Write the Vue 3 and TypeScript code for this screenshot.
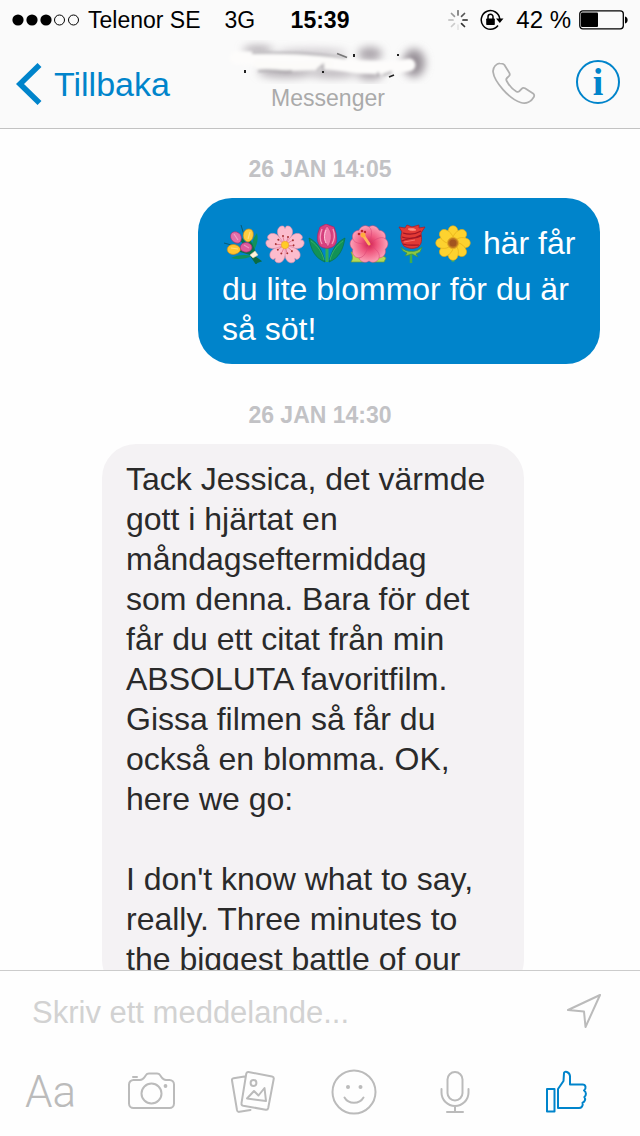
<script setup lang="ts">
import { ref } from 'vue'

interface Message {
  id: number
  time: string
  mine: boolean
  flowers: boolean
  lines: string[]
}

const draft = ref('')

const messages: Message[] = [
  {
    id: 1,
    time: '26 JAN 14:05',
    mine: true,
    flowers: true,
    lines: ['här får', 'du lite blommor för du är', 'så söt!'],
  },
  {
    id: 2,
    time: '26 JAN 14:30',
    mine: false,
    flowers: false,
    lines: [
      'Tack Jessica, det värmde',
      'gott i hjärtat en',
      'måndagseftermiddag',
      'som denna. Bara för det',
      'får du ett citat från min',
      'ABSOLUTA favoritfilm.',
      'Gissa filmen så får du',
      'också en blomma. OK,',
      'here we go:',
      '',
      "I don't know what to say,",
      'really. Three minutes to',
      'the biggest battle of our',
    ],
  },
]

const spokes = [
  { angle: 0, shade: '#777' },
  { angle: 45, shade: '#555' },
  { angle: 90, shade: '#222' },
  { angle: 135, shade: '#333' },
  { angle: 180, shade: '#e4e4e4' },
  { angle: 225, shade: '#ccc' },
  { angle: 270, shade: '#bbb' },
  { angle: 315, shade: '#999' },
]
const fivefold = [0, 72, 144, 216, 288]
const eightfold = [0, 45, 90, 135, 180, 225, 270, 315]
</script>

<template>
  <div class="phone">
    <header class="top">
      <div class="status">
        <div class="status-side">
          <svg class="signal" width="68" height="14" viewBox="0 0 68 14" aria-hidden="true">
            <circle cx="6" cy="7" r="5.6" /><circle cx="20" cy="7" r="5.6" /><circle cx="34" cy="7" r="5.6" />
            <circle class="hollow" cx="47.5" cy="7" r="5" /><circle class="hollow" cx="61.500" cy="7" r="5" />
          </svg>
          <span class="carrier">Telenor SE</span>
          <span>3G</span>
        </div>
        <strong class="clock">15:39</strong>
        <div class="status-side status-right">
          <svg width="20" height="20" viewBox="-10 -10 20 20" aria-hidden="true">
            <line v-for="s in spokes" :key="s.angle" x1="0" y1="-5" x2="0" y2="-9.200" :stroke="s.shade" stroke-width="1.700" stroke-linecap="round" :transform="`rotate(${s.angle})`" />
          </svg>
          <svg class="lock" width="24" height="22" viewBox="0 0 24 22" aria-hidden="true">
            <path d="M18 16.500A9.300 9.300 0 1 1 19.800 10" fill="none" stroke="#000" stroke-width="1.500" />
            <path d="M16 9.500h7.500l-3.700 4.500z" />
            <rect x="6.200" y="9.500" width="8.600" height="6.500" rx=".7" />
            <path d="M8 10V7.800a2.500 2.500 0 0 1 5 0V10" fill="none" stroke="#000" stroke-width="1.500" />
          </svg>
          <span class="percent">42 %</span>
          <svg width="49" height="20" viewBox="0 0 49 20" aria-hidden="true">
            <rect x=".8" y=".8" width="43.500" height="18" rx="3" fill="none" stroke="#000" stroke-width="1.300" />
            <rect x="2" y="2.500" width="17" height="14.500" rx="1" />
            <path d="M46 6.500c3.500.8 3.500 6 0 7z" />
          </svg>
        </div>
      </div>

      <nav class="nav">
        <div class="nav-side">
          <button class="plain back" type="button">
            <svg width="26" height="42" viewBox="0 0 26 42" aria-hidden="true">
              <path d="M23.500 2 4 21l19.500 19" fill="none" stroke="#0084cb" stroke-width="5.600" />
            </svg>
            <span>Tillbaka</span>
          </button>
        </div>
        <div class="title">
          <svg width="220" height="44" viewBox="0 0 220 44" aria-hidden="true">
            <defs>
              <filter id="soft" x="-30%" y="-60%" width="160%" height="220%"><feGaussianBlur stdDeviation="4" /></filter>
              <filter id="mild" x="-30%" y="-60%" width="160%" height="220%"><feGaussianBlur stdDeviation="1.500" /></filter>
            </defs>
            <g filter="url(#soft)" fill="#aaa4aa">
              <ellipse cx="40" cy="10" rx="15" ry="4" />
              <ellipse cx="68" cy="32" rx="28" ry="6" opacity=".85" />
              <ellipse cx="115" cy="33" rx="24" ry="5" opacity=".8" />
              <ellipse cx="152" cy="14" rx="12" ry="7" />
              <ellipse cx="152" cy="34" rx="13" ry="6" />
              <ellipse cx="196" cy="23" rx="11" ry="14" fill="#989198" />
              <ellipse cx="94" cy="13" rx="36" ry="4" opacity=".6" />
            </g>
            <g filter="url(#mild)">
              <path d="M18 18c60 0 90 4 123 9 30 1 36 1 50-2" fill="none" stroke="#fdfcfb" stroke-width="13" stroke-linecap="round" />
              <path d="M40 24c22 4 48 2 71 0" fill="none" stroke="#fcfbf9" stroke-width="9" stroke-linecap="round" />
              <path d="M34 13c33-1 56 0 94 5M40 31c15-3 22 2 34 0M99 30l6-5v7M160 32v4M165 35l9-3" fill="none" stroke="#77727a" stroke-width="2" opacity=".6" />
            </g>
            <path d="M119 13.500l10 4" fill="none" stroke="#777" stroke-width="1.800" />
            <path d="M171 37l5-2" stroke="#222" stroke-width="1.600" />
            <path d="M26 30h2v3h-2zM135 14h2v3h-2zM179 14h2v2h-2zM104 31h2v2h-2z" fill="#222" />
          </svg>
          <span>Messenger</span>
        </div>
        <div class="nav-side nav-right">
          <button class="plain call" type="button" aria-label="Ring">
            <svg width="44" height="44" viewBox="0 0 44 44" aria-hidden="true">
              <path d="M8.200 2.300C5.500 2.200 1 6 1.600 11c1.100 9.600 16.200 27 27.500 30.500 6.300 2 11-1.500 13.200-5.500.7-1.400.4-2.700-.7-3.500l-8.100-5.200c-1.300-.8-2.500-.5-3.400.5l-2.200 2.400c-.9.900-2 .9-3.100.3-3.300-1.900-7.500-6.600-9.600-10.500-.7-1.200-.6-2.100.3-3l1.900-1.800c1-1 1.100-2.100.4-3.300l-5-8.200c-.7-1-1.500-1.400-4.600-1.400z" transform="translate(-.5 0)" fill="none" stroke="#b0b0b0" stroke-width="1.800" stroke-linejoin="round" />
            </svg>
          </button>
          <button class="plain info" type="button" aria-label="Info"><span>i</span></button>
        </div>
      </nav>
    </header>

    <main class="chat">
      <section v-for="m in messages" :key="m.id" class="entry">
        <time class="date">{{ m.time }}</time>
        <div class="bubble" :class="m.mine ? 'mine' : 'theirs'">
          <template v-if="m.flowers">
            <svg class="flower" viewBox="0 0 40 40" role="img" aria-label="Bukett">
              <path d="M1 19l11 3M18 1l3 10" stroke="#075b75" stroke-width="1" />
              <path d="M34 9c2 8-1 14-4 19-3-7 0-13 4-19zM8 34c6-3 14-4 21-2-6 3-14 4-21 2z" fill="#11915b" />
              <path d="M18 15l13 16M26 16l6 14M16 26l16 5" fill="none" stroke="#087449" stroke-width="3" />
              <path d="M29 31l8 6-3 1-1 1-4-6z" fill="#0a6b43" stroke="#0a6b43" stroke-width="2" />
              <g stroke-width=".7">
                <path d="M8 10c2-4 9-2 10 2 1 3 0 6-2 7-5 1-10-4-8-9z" fill="#e36faa" stroke="#a42d70" />
                <path d="M21 8c2-4 8-4 9 0 1 5-1 9-5 10-4-1-6-5-4-10z" fill="#ffcd3f" stroke="#d78810" />
                <path d="M5 23c3-4 10-3 13 2-2 6-10 7-13 3-1-2-1-3 0-5z" fill="#ffc531" stroke="#d78810" />
                <path d="M18 21c3-4 10-3 11 2 0 5-7 7-11 3-1-2-1-3 0-5z" fill="#df5a9d" stroke="#a42d70" />
              </g>
              <path d="M11 10l4 6M27 8l-2 7M8 24l7 1M21 21l5 3" stroke="#fff" stroke-width="1.200" opacity=".35" />
              <path d="M27 31l5-4 3 4-5 3z" fill="#fff4dc" stroke="#d8c8a9" stroke-width=".6" />
            </svg>
            <svg class="flower" viewBox="0 0 40 40" role="img" aria-label="Körsbärsblom">
              <g transform="translate(20 21)">
                <path v-for="a in fivefold" :key="a" d="M0 0C-2-4-8-8-7.500-14c.5-4 4-6 6.500-4.500l1 2 1-2c2.500-1.500 6 .5 6.500 4.500C8-8 2-4 0 0z" :transform="`rotate(${a})`" fill="#fcbccd" stroke="#e58fab" stroke-width=".6" />
                <g v-for="a in fivefold" :key="`s${a}`" :transform="`rotate(${a})`"><path d="M0 0-2-8M0 0l3-7" stroke="#e0748c" stroke-width=".8" /><circle cx="-2" cy="-9" r="1" fill="#a63030" /><circle cx="3" cy="-8" r="1" fill="#a63030" /></g>
                <circle r="3.700" fill="#ffcb27" stroke="#f0a030" stroke-width=".6" />
              </g>
            </svg>
            <svg class="flower" viewBox="0 0 40 40" role="img" aria-label="Tulpan">
              <path d="M20 22v16" stroke="#2fae5b" stroke-width="3" />
              <path d="M2 14c8 4 13 11 16 24C8 34 4 26 2 14zM38 14c-8 4-13 11-16 24 10-4 14-12 16-24z" fill="#129257" stroke="#087349" stroke-width=".7" />
              <path d="M4 17c7 5 11 11 13 19M36 17c-7 5-11 11-13 19" fill="none" stroke="#3fb56d" stroke-width=".8" />
              <path d="M13 3 19 0l8 3 2 6c1 6 1 10-2 13-4 3-10 3-14 0-3-4-3-8-2-13z" fill="#d9407f" stroke="#ac2360" stroke-width=".7" />
              <path d="M15 5c-2 5-3 10 0 15M26 5c2 5 2 10-1 15" stroke="#f29bbd" stroke-width="1.300" fill="none" />
              <path d="M20 2c5 5 6 13 1 21-6-8-6-15-1-21z" fill="#f07cab" stroke="#bf2f6b" stroke-width=".6" /><path d="M19 6c-2 5-2 9 0 13" fill="none" stroke="#ffcada" />
            </svg>
            <svg class="flower" viewBox="0 0 40 40" role="img" aria-label="Hibiskus">
              <defs><radialGradient id="hib" gradientUnits="userSpaceOnUse" cx="0" cy="0" r="18"><stop offset="0" stop-color="#cf1f4e" /><stop offset=".45" stop-color="#f0587f" /><stop offset="1" stop-color="#fb9db4" /></radialGradient></defs>
              <path d="M2 28c7 0 11 2 13 10H2c2-3 2-6 0-10zM23 38c2-8 9-8 14-4l-2 4z" fill="#b4d957" stroke="#6d9f36" stroke-width=".7" />
              <g transform="translate(20 20)"><path v-for="a in fivefold" :key="a" d="M0 0C-4-3-12-8-10-14c2-5 7-5 10-3 3-2 8-2 10 3 2 6-6 11-10 14z" :transform="`rotate(${a + 36})`" fill="url(#hib)" stroke="#d94779" stroke-width=".5" /></g>
              <path d="M20 20 14 11" stroke="#ffb35c" stroke-width="3" stroke-linecap="round" /><g fill="#b9252c"><circle cx="10" cy="10" r="1.300" /><circle cx="13" cy="7" r="1.300" /><circle cx="16" cy="8" r="1.200" /></g><circle cx="14" cy="11" r="2.500" fill="#ffae3d" />
            </svg>
            <svg class="flower" viewBox="0 0 40 40" role="img" aria-label="Ros">
              <path d="M20 27v12" stroke="#3fae4c" stroke-width="2.500" />
              <path d="M10 23c5 6 16 6 21 0l-2 5-4 2 2 3-6-3-7 2 2-3-4-2z" fill="#8dc63f" stroke="#3a9446" stroke-width=".7" />
              <path d="M8 3l6 1 2-3 5 2 7-2v3l6-1-4 6c1 7 1 11-3 14-4 2-9 2-14-1-3-4-4-9-2-14z" fill="#e23a35" stroke="#a91d29" stroke-width=".8" />
              <path d="M12 9c6 2 13 1 18-2M11 13c8 3 14 1 19-2M11 17c5-3 13-2 19-5M12 20c6 2 10 1 16 1" fill="none" stroke="#9f1525" stroke-width="1.200" />
              <path d="M17 5c3-1 6-1 8 1-3 1-6 1-8-1zM13 18l11-2" fill="#ff9385" stroke="#ff8176" stroke-width=".8" />
            </svg>
            <svg class="flower" viewBox="0 0 40 40" role="img" aria-label="Gul blomma">
              <path d="M20 32v6" stroke="#2aa57b" stroke-width="3" />
              <g transform="translate(20 19)"><path v-for="a in eightfold" :key="a" d="M0 0C-5-3-7-9-4-15c2-3 6-3 8 0C7-9 5-3 0 0z" :transform="`rotate(${a})`" fill="#fdd22f" stroke="#e3aa14" stroke-width=".6" /><circle r="5.500" fill="#bd7520" stroke="#e6ab24" /><circle r="3.500" fill="#a3541f" /></g>
            </svg>
            {{ ' ' }}
          </template>
          <template v-for="(line, i) in m.lines" :key="i">{{ line }}<br></template>
        </div>
      </section>
    </main>

    <footer class="composer">
      <form class="compose-row" @submit.prevent>
        <input v-model="draft" type="text" aria-label="Meddelande" placeholder="Skriv ett meddelande...">
        <button class="plain" type="submit" aria-label="Skicka">
          <svg width="36" height="36" viewBox="0 0 36 36" aria-hidden="true">
            <path d="M34 2 2 17l16 1.500L19.500 34z" fill="none" stroke="#bbb" stroke-width="2" stroke-linejoin="round" />
          </svg>
        </button>
      </form>
      <div class="tools">
        <button class="plain letters" type="button" aria-label="Text">Aa</button>
        <button class="plain" type="button" aria-label="Kamera">
          <svg width="48" height="44" viewBox="0 0 48 44" class="line"><path d="M5.500 10H12c3 0 3.500-1.200 5-3.500l1-1.500c.7-1.200 1.400-1.500 3-1.500h8c1.600 0 2.300.3 3 1.500l1 1.500c1.500 2.300 2 3.500 5 3.500h3.500A4.500 4.500 0 0 1 46 14.500v19A4.500 4.500 0 0 1 41.500 38h-36A4.500 4.500 0 0 1 1 33.500v-19A4.500 4.500 0 0 1 5.500 10zM5 7h4" /><circle cx="23.500" cy="23.500" r="10" /><circle class="dot" cx="37.500" cy="16" r="1.900" /></svg>
        </button>
        <button class="plain" type="button" aria-label="Bilder">
          <svg width="44" height="44" viewBox="0 0 44 44" class="line"><path d="M17.500 2 41 6.500c1.400.3 2 1.100 1.700 2.500l-5.500 29c-.3 1.400-1.100 2-2.500 1.700l-22.500-4c-1.400-.3-2-1.100-1.700-2.500L15.200 4c.2-1.400.9-2.200 2.300-2zM13.500 6.500 2.600 8.200C1.200 8.400.8 9.200 1 10.500l5 29.500c.3 1.500 1 2.100 2.500 1.800L19.500 40" /><circle cx="22.500" cy="13" r="2.900" /><path d="M16 28.500 23 21l4.500 4.500 6-7.500 1.500 13z" /></svg>
        </button>
        <button class="plain" type="button" aria-label="Smiley">
          <svg width="46" height="46" viewBox="0 0 46 46" class="line"><circle cx="23" cy="23" r="21.500" /><path d="M13.500 28.500c4 7 15 7 19 0" /><circle class="dot" cx="17" cy="18" r="2" /><circle class="dot" cx="29.500" cy="18" r="2" /></svg>
        </button>
        <button class="plain" type="button" aria-label="Röstmeddelande">
          <svg width="30" height="44" viewBox="0 0 30 44" class="line"><rect x="7.500" y="2" width="15" height="28.500" rx="7.500" /><path d="M1.500 19v3.500a13.500 13.500 0 0 0 27 0V19M15 36v6M7 42h16" /></svg>
        </button>
        <button class="plain" type="button" aria-label="Gilla">
          <svg width="42" height="44" viewBox="0 0 42 44" fill="none" stroke="#0084cb" stroke-width="2"><path d="M1 19h7.500v22.500H1zM12 38V19l5.500-8 .5-8c.3-2.300 5.500-1.500 6 3v8.500h12.500c3.500 0 4 4 1.500 6 2.500 1.500 2.500 5 .3 6.500 1.500 2 .8 5-1.800 5.800 1 3-1.200 5.200-3.500 5.200z" stroke-linejoin="round" /></svg>
        </button>
      </div>
    </footer>
  </div>
</template>

<style>
body { margin: 0; }
</style>

<style scoped>
.phone {
  display: flex;
  flex-direction: column;
  height: 100vh;
  overflow: hidden;
  background: #fefefe;
  color: #2a2a2a;
  font-family: "Liberation Sans", Arial, sans-serif;
}
svg { display: block; flex: none; }
.plain {
  margin: 0;
  padding: 0;
  border: 0;
  background: none;
  font: inherit;
  color: inherit;
}
.top { flex: none; background: #fafafa; border-bottom: 1px solid #c2c2c2; }
.status {
  display: flex;
  align-items: center;
  height: 40px;
  padding: 0 12px;
  color: #000;
  font-size: 23px;
}
.status-side { display: flex; align-items: center; flex: 1; }
.status-right { justify-content: flex-end; }
.signal { margin-right: 8px; }
.hollow { fill: none; stroke: #000; stroke-width: 1; }
.carrier { margin-right: 24px; }
.lock { margin: 0 12px; }
.percent { font-size: 24px; margin-right: 8px; }
.nav { display: flex; height: 88px; padding: 0 20px 0 16px; }
.nav-side { display: flex; align-items: center; flex: 1; }
.nav-right { justify-content: flex-end; gap: 40px; padding-bottom: 4px; }
.back { display: flex; align-items: center; gap: 12px; color: #0084cb; font-size: 34px; line-height: 40px; }
.title {
  display: flex;
  flex-direction: column;
  align-items: center;
  padding-left: 20px;
  color: #aaa;
  font-size: 23px;
  line-height: 28px;
}
.call { padding-top: 2px; }
.info {
  box-sizing: border-box;
  width: 44px;
  height: 44px;
  border: 2px solid #0084cb;
  border-radius: 50%;
  color: #0084cb;
  font-family: "Liberation Serif", serif;
  font-weight: bold;
  font-size: 38px;
  line-height: 38px;
}
.chat { flex: 1; min-height: 0; overflow: hidden; padding: 20px 40px 0 102px; }
.entry { display: flex; flex-direction: column; margin-bottom: 31px; }
.date {
  align-self: center;
  margin: 0 62px 9px 0;
  color: #c2c2c5;
  font-size: 23px;
  font-weight: bold;
  line-height: 40px;
}
.bubble {
  padding: 15px 24px;
  border-radius: 34px;
  font-size: 32px;
  line-height: 40px;
  white-space: nowrap;
}
.mine { align-self: flex-end; min-width: 354px; background: #0084cb; color: #fff; }
.theirs { align-self: flex-start; min-width: 374px; background: #f4f2f4; }
.flower {
  display: inline-block;
  width: 40px;
  height: 40px;
  margin: 11px 1px 5px;
  vertical-align: -15px;
}
.composer { flex: none; background: #fefefe; border-top: 1px solid #ccc; }
.compose-row { display: flex; align-items: center; height: 80px; padding: 0 38px 0 32px; }
.compose-row input {
  flex: 1;
  min-width: 0;
  padding: 4px 0 0;
  border: 0;
  outline: 0;
  background: none;
  color: #2a2a2a;
  font: 31px "Liberation Sans", Arial, sans-serif;
}
.compose-row input::placeholder { color: #d2d2d2; opacity: 1; }
.tools {
  display: grid;
  grid-template-columns: repeat(5, 101fr) 123fr;
  align-items: center;
  justify-items: center;
  height: 82px;
  padding: 0 12px 3px 0;
}
.letters { color: #bbb; font-family: Roboto, sans-serif; font-weight: 300; font-size: 44px; line-height: 44px; }
.line { fill: none; stroke: #bbb; stroke-width: 2; stroke-linecap: round; stroke-linejoin: round; }
.dot { fill: #bbb; stroke: none; }
</style>
